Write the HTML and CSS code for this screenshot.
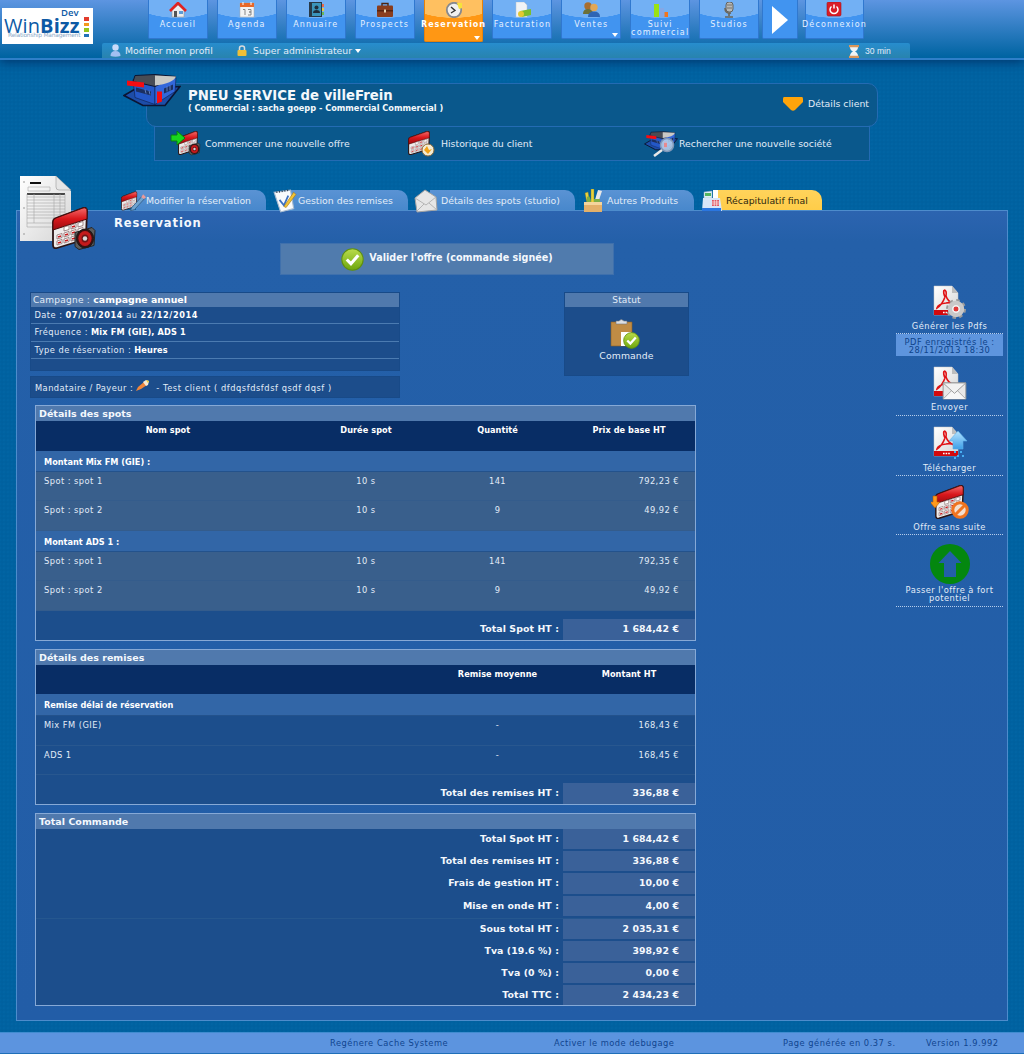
FILE: index.html
```html
<!DOCTYPE html>
<html lang="fr">
<head>
<meta charset="utf-8">
<title>WinBizz - Reservation</title>
<link rel="stylesheet" href="styles.css">
</head>
<body>
<svg class="defs" width="0" height="0" aria-hidden="true">
  <defs>
    <linearGradient id="gRed" x1="0" y1="0" x2="0" y2="1"><stop offset="0" stop-color="#f46a6a"/><stop offset=".5" stop-color="#d8171b"/><stop offset="1" stop-color="#9c0b10"/></linearGradient>
    <linearGradient id="gGreen" x1="0" y1="0" x2="0" y2="1"><stop offset="0" stop-color="#b9dc4b"/><stop offset="1" stop-color="#6ea60d"/></linearGradient>
    <linearGradient id="gPaper" x1="0" y1="0" x2="1" y2="1"><stop offset="0" stop-color="#fff"/><stop offset="1" stop-color="#d5d5d5"/></linearGradient>
    <linearGradient id="gSky" x1="0" y1="0" x2="0" y2="1"><stop offset="0" stop-color="#b5e3ff"/><stop offset="1" stop-color="#3d9fe8"/></linearGradient>
  </defs>
  <symbol id="calendar" viewBox="0 0 36 42" preserveAspectRatio="none">
    <path d="M4 11 31 1q4-1 4 3l-1 25q0 3-3 4L5 41q-4 1-4-3V15q0-3 3-4z" fill="#efecec" stroke="#2b1414" stroke-width="1.800"/>
    <path d="M4 11 31 1q4-1 4 3v8L1 23v-8q0-3 3-4z" fill="url(#gRed)" stroke="#4a0a0a"/>
    <path d="m12 20 5-1.500v4L12 24zm7-2 5-1.500v4L19 22zm7-2 5-1.500v4L26 20zM5 28l5-1.500v4L5 32zm7-2 5-1.500v4L12 30zm7-2 5-1.500v4L19 28zm7-2 5-1.500v4L26 26zM5 34l5-1.500v4L5 38zm7-2 5-1.500v4L12 36zm7-2 5-1.500v4L19 34zm7-2 5-1.500v4L26 32z" fill="#fff" stroke="#7d5c5c" stroke-width=".7"/>
    <path d="m20 20 3-1M6 30l3-1m4-1 3-1m4-1 3-1M6 36l3-1m4-1 3-1m4-1 3-1" stroke="#c8171b" stroke-width="1.500"/>
  </symbol>
  <symbol id="building" viewBox="0 0 58 34">
    <path d="M1 22 13 15l44-2-15 19H20z" fill="#1d4da8" stroke="#0b1533" stroke-width="1.600"/>
    <path d="m10 6 22 5v20l-20-7z" fill="#2458c8" stroke="#0b1533" stroke-width=".5"/>
    <path d="m32 11 21-7-1 14-20 13z" fill="#3267da" stroke="#0b1533" stroke-width=".5"/>
    <path d="m12 2 20-1 21 2-21 10L10 8z" fill="#484c55" stroke="#0b1533"/>
    <path d="M32 2 53 3q-3 7-21 9z" fill="#c9c9c5"/>
    <path d="m4 7 17 2v5L4 12z" fill="#f40d12"/><path d="M34 18h5v10l-5 2z" fill="#f40d12"/>
    <path d="m41 15 9-4v5l-9 4zM13 14l15 4v4l-15-4z" fill="#1b2f60"/>
    <path d="m22 16 1 4m3-3 1 4m17-8v5m3-6v5" stroke="#7ba0e6" stroke-width=".7"/>
  </symbol>
  <symbol id="speaker" viewBox="0 0 24 24">
    <path d="M2 6 19 1l3 3-1 15-15 4-4-3z" fill="#5c5c5c" stroke="#242424"/>
    <ellipse cx="12" cy="12" rx="8.600" ry="9.400" fill="#3b1010" stroke="#1c1c1c"/>
    <ellipse cx="12" cy="12" rx="6.600" ry="7.400" fill="#c41a1c"/><ellipse cx="12" cy="12" rx="3.500" ry="4" fill="#6c1517"/>
    <circle cx="12" cy="12" r="2.200" fill="#d8d8d8"/>
  </symbol>
  <symbol id="pdf" viewBox="0 0 26 31">
    <path d="M1 1h18l6 7v22H1z" fill="url(#gPaper)" stroke="#c4c4c4" stroke-width=".5"/><path d="M19 1v7h6z" fill="#bdbdbd"/>
    <path d="M11 5q3 0 2 6 2 6 8 8M12 12Q9 20 4 23q1-4 9-5 5-1 8 1M11 5q-1 3 1 7" fill="none" stroke="#e01215" stroke-width="1.600"/>
    <path d="M1 25h24v5H1z" fill="#d3090d"/><path d="M10 27.500h7" stroke="#fff" stroke-width="1.400" stroke-dasharray="1.600 1"/>
  </symbol>
  <symbol id="envelope" viewBox="0 0 26 19">
    <path d="M1 1h24v17H1z" fill="#e8e8e8" stroke="#929292"/><path d="m1 18 9-9h6l9 9" fill="#f7f7f7" stroke="#aaa"/><path d="m1 1 12 11L25 1z" fill="#f2f2f2" stroke="#999"/>
  </symbol>
  <symbol id="check" viewBox="0 0 22 22">
    <circle cx="11" cy="11" r="10.200" fill="url(#gGreen)" stroke="#5f8f10"/><path d="m5.500 11 4 4 7-8" fill="none" stroke="#fff" stroke-width="3"/>
  </symbol>
</svg>

<header class="top">
  <div class="logo">
    <span class="logo-dev">Dev</span>
    <span class="logo-name">Win<b>Bizz</b></span>
    <span class="logo-sub">Relationship Management</span>
    <span class="logo-bars"><i></i><i></i><i></i><i></i></span>
  </div>
  <div class="top-main">
    <nav class="nav">
      <a class="tile"><svg viewBox="0 0 18 16"><path d="M3 8v7h12V8L9 3z" fill="#eee" stroke="#999" stroke-width=".6"/><path d="M1 9 9 1l8 8" fill="none" stroke="#e12222" stroke-width="2.600"/><path d="M5 9h3v6H5z" fill="#555"/><path d="M10 9h4v3h-4z" fill="#5d9bd6"/></svg><span>Accueil</span></a>
      <a class="tile"><svg viewBox="0 0 18 16"><path d="M2 1h14v14H2z" fill="#f4f4f4" stroke="#aaa" stroke-width=".5"/><path d="M2 1h14v4H2z" fill="#e8692a"/><path d="M5 0v3m8-3v3" stroke="#fff"/><path d="M5 7.500h2V13m3-5.500h3V10h-2 2v3h-3" fill="none" stroke="#888"/></svg><span>Agenda</span></a>
      <a class="tile"><svg viewBox="0 0 18 16"><path d="M2 0h13v15H2z" fill="#273947"/><path d="M5 1h9v13H5z" fill="#3a94bb"/><circle cx="9.500" cy="5.500" r="2" fill="#1f2d3c"/><path d="M6 11q0-3 3.500-3t3.500 3z" fill="#1f2d3c"/><path d="M15 2h2v3h-2z" fill="#e9694b"/><path d="M15 6h2v3h-2z" fill="#e7c74b"/><path d="M15 10h2v3h-2z" fill="#66b85a"/></svg><span>Annuaire</span></a>
      <a class="tile"><svg viewBox="0 0 18 16"><path d="M6 4V1.500h6V4" fill="none" stroke="#4c2411" stroke-width="1.400"/><rect x="1" y="3.500" width="16" height="11.500" rx="1" fill="#8a3d1c"/><path d="M1 8h16v1.500H1z" fill="#57240f"/><path d="M8 7.500h2v3H8z" fill="#e8d3b0"/></svg><span>Prospects</span></a>
      <a class="tile active"><svg viewBox="0 0 18 16"><circle cx="9" cy="8" r="7.200" fill="#f0f0f0" stroke="#87898e" stroke-width="1.800"/><path d="m6 5 4 3.500L6 11" fill="none" stroke="#333" stroke-width="1.400"/><path d="M12 1h5v5l-3 1z" fill="#f6e33c"/></svg><span>Reservation</span><em class="caret"></em></a>
      <a class="tile"><svg viewBox="0 0 18 16"><path d="M3 0h8l3 3v12H3z" fill="#f0f3f6" stroke="#b8c1ca" stroke-width=".5"/><path d="m7 9 11-2v6l-9 2z" fill="#7dbd2c"/><circle cx="8" cy="12" r="3" fill="#e4c832"/></svg><span>Facturation</span></a>
      <a class="tile"><svg viewBox="0 0 18 16"><circle cx="6" cy="4" r="3.700" fill="#a86e30"/><path d="M1 12q0-5 5-5t5 5z" fill="#6c7038"/><circle cx="12" cy="5.500" r="3.700" fill="#e2a755"/><path d="M6 15q0-5.500 6-5.500t6 5.500z" fill="#2d65b5"/></svg><span>Ventes</span><em class="caret"></em></a>
      <a class="tile"><svg viewBox="0 0 18 16"><path d="M3 2h5v13H3z" fill="#9ae212"/><path d="M9 6h4v9H9z" fill="#84a8e6"/><path d="M13.500 10H17v5h-3.500z" fill="#f2751d"/></svg><span>Suivi<br>commercial</span></a>
      <a class="tile"><svg viewBox="0 0 18 16"><rect x="6" y="0" width="7" height="10" rx="3" fill="#b9b9b6" stroke="#62625e"/><path d="M5 6q0 6 6 5M9 11v3m-4 1h8" fill="none" stroke="#6a655a" stroke-width="1.600"/><path d="M7 3h5M7 6h5" stroke="#73736e"/></svg><span>Studios</span></a>
      <a class="tile more"><svg viewBox="0 0 16 28"><path d="M0 0v28l16-14z" fill="#fff"/></svg></a>
      <a class="tile logout"><svg viewBox="0 0 18 16"><rect x="2" y="0" width="14" height="14" rx="1.500" fill="#d91d26" stroke="#a9131a" stroke-width=".6"/><path d="M6.500 4.500a4 4 0 1 0 5 0M9 2.500v4" fill="none" stroke="#fff" stroke-width="1.500"/></svg><span>Déconnexion</span></a>
    </nav>
    <div class="userbar">
      <svg class="u-user" viewBox="0 0 11 13"><circle cx="5.500" cy="3.500" r="3.200" fill="#c9dbfa"/><path d="M.5 12q0-5 5-5t5 5q-5 1.500-10 0z" fill="#a3bff2"/></svg><span class="u-profile">Modifier mon profil</span>
      <svg class="u-lock" viewBox="0 0 10 11"><path d="M2.500 5V3q0-2 2.500-2t2.500 2v2" fill="none" stroke="#ddd" stroke-width="1.500"/><rect x=".5" y="5" width="9" height="6" rx="1" fill="#f0bf37"/></svg><span class="u-admin">Super administrateur</span><em class="caret"></em>
      <svg class="u-time" viewBox="0 0 12 13"><path d="M2 2q0 3 3 4.500Q2 8 2 11h8q0-3-3-4.500Q10 5 10 2z" fill="#eef3f6"/><path d="M1 0h10v2.200H1zm0 10.800h10V13H1z" fill="#d9965a"/></svg><span class="u-min">30 min</span>
    </div>
  </div>
</header>

<section class="client">
  <div class="client-head">
    <svg class="client-logo"><use href="#building"/></svg>
    <div class="client-name"><h1>PNEU SERVICE de villeFrein</h1><p>( Commercial : sacha goepp - Commercial Commercial )</p></div>
    <svg class="down" viewBox="0 0 20 14"><path d="M1 0h18q1 0 1 2v3l-8 8q-2 1.500-4 0L0 5V2q0-2 1-2z" fill="#ffa40a"/></svg>
    <span>Détails client</span>
  </div>
  <div class="client-menu">
    <a><svg viewBox="0 0 32 26"><use href="#calendar" x="8" y="0" width="20" height="24"/><use href="#speaker" x="18" y="11" width="13" height="14"/><path d="M1 4h6V0l8 7-8 7v-4H1z" fill="#19d81c" stroke="#0a7c12"/></svg><span>Commencer une nouvelle offre</span></a>
    <a><svg viewBox="0 0 32 26"><use href="#calendar" x="2" y="0" width="22" height="24"/><circle cx="22" cy="19" r="6" fill="#f4ecd4" stroke="#8a6a3a"/><path d="m18 19 4 4 4-5-3 1-2-4z" fill="#f2a31a"/></svg><span>Historique du client</span></a>
    <a><svg viewBox="0 0 36 26"><use href="#building" x="0" y="0" width="36" height="20"/><circle cx="24" cy="14" r="6.500" fill="#bcd6ee" fill-opacity=".85" stroke="#7f97b8" stroke-width="1.500"/><path d="m19 19-8 6" stroke="#e8e8e8" stroke-width="2.600"/><path d="M21 12h3v4h-3z" fill="#e68a90"/></svg><span>Rechercher une nouvelle société</span></a>
  </div>
</section>

<nav class="tabs">
  <a class="t1"><svg viewBox="0 0 27 22"><use href="#calendar" x="1" y="1" width="17" height="20"/><path d="m12 18 11-12 3 2-11 12-4 1z" fill="#6fa3cf" stroke="#3a648f"/><path d="m22 7 2-3 3 3-2 2z" fill="#e99a9a"/></svg><span>Modifier la réservation</span></a>
  <a class="t2"><svg viewBox="0 0 22 22"><path d="m1 3 15-2 3 17-12 3z" fill="#f8fafc" stroke="#a6bad0"/><path d="m3 3 12-2" stroke="#345" stroke-width="1.500" stroke-dasharray="1 1.500"/><path d="m6 10 4 5 4-9" fill="none" stroke="#3b70c0" stroke-width="1.600"/><path d="m10 16 9-13 2 2-9 12z" fill="#f2c436" stroke="#a87a18" stroke-width=".6"/></svg><span>Gestion des remises</span></a>
  <a class="t3"><svg viewBox="0 0 24 24"><path d="M1 9 11 1l11 7 1 13-20 2z" fill="#e6e6e6" stroke="#a3a3a3"/><path d="m1 9 11 7L22 8M3 22l7-7m13 6-8-7" fill="none" stroke="#b5b5b5"/></svg><span>Détails des spots (studio)</span></a>
  <a class="t4"><svg viewBox="0 0 20 24"><path d="m2 4 3-1 2 11H4zm6-4h3v14H8z" fill="#e8d23c" stroke="#8b7a20" stroke-width=".4"/><path d="m15 1 4 1-4 12h-4z" fill="#e7e7e7"/><path d="M4 8q3-3 4 5H4zm7 2h6v5h-6z" fill="#7daf46"/><path d="M1 13h18v10H1z" fill="#e3b06a"/><path d="M1 13h18v3H1z" fill="#f4d59c"/></svg><span>Autres Produits</span></a>
  <a class="t5 current"><svg viewBox="0 0 20 22"><path d="m2 2 8-1v7H2z" fill="#dfeef5" stroke="#8fb0c4" stroke-width=".5"/><path d="M3 3h6v3H3z" fill="#53b45f"/><path d="M11 0h5v8h-5z" fill="#fff"/><path d="M1 8h17l2 13H0z" fill="#d8e6f8"/><path d="M0 18h19v3H0z" fill="#2a76e0"/><path d="M10 10h7v6h-7z" fill="#e05560"/><path d="M12.300 10v6m2.400-6v6M10 12h7m-7 2h7" stroke="#fff" stroke-width=".6"/></svg><span>Récapitulatif final</span></a>
</nav>

<main class="panel">
  <svg class="panel-icon" viewBox="0 0 78 78">
    <path d="M1 1h36l15 15v50H1z" fill="url(#gPaper)"/><path d="M37 1v11q0 3 3 3h12z" fill="#e6e6e6" stroke="#888" stroke-width=".5"/>
    <path d="M11 8h11" stroke="#111" stroke-width="2"/><path d="M9 12h22v4H9z" fill="none" stroke="#aaa" stroke-width=".6"/><path d="M8 19h38" stroke="#111" stroke-width="1.600"/>
    <path d="M8 19v33h38V19M15 19v29m20-29v29m6-29v29M8 22h38M8 25h38M8 28h38M8 31h38M8 34h38M8 37h38M8 40h38M8 43h38M8 48h38" fill="none" stroke="#a6a6a6" stroke-width=".6"/>
    <path d="M4 7h2M4 33h2M4 59h2" stroke="#999"/>
    <use href="#calendar" x="33" y="32" width="36" height="42"/><use href="#speaker" x="54" y="50" width="24" height="27"/>
  </svg>
  <div class="content">
    <h2>Reservation</h2>
    <button class="validate"><svg><use href="#check"/></svg>Valider l'offre (commande signée)</button>
    <div class="infos">
      <div class="infos-left">
        <div class="card campaign">
          <h3>Campagne : <b>campagne annuel</b></h3>
          <p class="dates">Date : <b>07/01/2014</b> au <b>22/12/2014</b></p>
          <p>Fréquence : <b>Mix FM (GIE), ADS 1</b></p>
          <p>Type de réservation : <b>Heures</b></p>
        </div>
        <div class="card payer">Mandataire / Payeur : <svg viewBox="0 0 13 11"><path d="m0 11 2-4 6-5 3 3-6 4z" fill="#f0863a"/><path d="m7 2 3-2 3 1-1 4-2 1z" fill="#f7ead2"/><path d="m10 0 3 1-1 2z" fill="#f0cf2a"/></svg><span>- Test client ( dfdqsfdsfdsf qsdf dqsf )</span></div>
      </div>
      <div class="card status">
        <h3>Statut</h3>
        <svg viewBox="0 0 30 30"><path d="M1 3h21v24H1z" fill="#c08c45" stroke="#8c6027" stroke-width=".6"/><path d="M6 2h3q2-3 5 0h3v3H6z" fill="#dcdfe3" stroke="#777" stroke-width=".6"/><path d="M11 13h10v14H11z" fill="#fff"/><use href="#check" x="13" y="13" width="17" height="17"/></svg>
        <span>Commande</span>
      </div>
    </div>

    <section class="box">
      <h3>Détails des spots</h3>
      <div class="row head"><span>Nom spot</span><span>Durée spot</span><span>Quantité</span><span>Prix de base HT</span></div>
      <div class="group">Montant Mix FM (GIE) :</div>
      <div class="row alt"><span>Spot : spot 1</span><span>10 s</span><span>141</span><span>792,23 €</span></div>
      <div class="row alt"><span>Spot : spot 2</span><span>10 s</span><span>9</span><span>49,92 €</span></div>
      <div class="group">Montant ADS 1 :</div>
      <div class="row alt"><span>Spot : spot 1</span><span>10 s</span><span>141</span><span>792,35 €</span></div>
      <div class="row alt"><span>Spot : spot 2</span><span>10 s</span><span>9</span><span>49,92 €</span></div>
      <div class="total foot"><span>Total Spot HT :</span><b>1 684,42 €</b></div>
    </section>

    <section class="box discounts">
      <h3>Détails des remises</h3>
      <div class="row head"><span></span><span></span><span>Remise moyenne</span><span>Montant HT</span></div>
      <div class="group">Remise délai de réservation</div>
      <div class="row"><span>Mix FM (GIE)</span><span></span><span>-</span><span>168,43 €</span></div>
      <div class="row"><span>ADS 1</span><span></span><span>-</span><span>168,45 €</span></div>
      <div class="total foot"><span>Total des remises HT :</span><b>336,88 €</b></div>
    </section>

    <section class="box order">
      <h3>Total Commande</h3>
      <div class="total"><span>Total Spot HT :</span><b>1 684,42 €</b></div>
      <div class="total"><span>Total des remises HT :</span><b>336,88 €</b></div>
      <div class="total"><span>Frais de gestion HT :</span><b>10,00 €</b></div>
      <div class="total"><span>Mise en onde HT :</span><b>4,00 €</b></div>
      <div class="total sub"><span>Sous total HT :</span><b>2 035,31 €</b></div>
      <div class="total"><span>Tva (19.6 %) :</span><b>398,92 €</b></div>
      <div class="total"><span>Tva (0 %) :</span><b>0,00 €</b></div>
      <div class="total"><span>Total TTC :</span><b>2 434,23 €</b></div>
    </section>
  </div>

  <aside class="actions">
    <a class="a1"><svg viewBox="0 0 36 36"><use href="#pdf" x="1" y="1" width="26" height="31"/><circle cx="24" cy="25" r="8.500" fill="none" stroke="#9b9b9b" stroke-width="3" stroke-dasharray="3.400 3.270"/><circle cx="24" cy="25" r="6" fill="#fff" stroke="#c9c9c9" stroke-width="4.500"/><circle cx="24" cy="25" r="3" fill="#e03a3a" stroke="#f0f0f0"/></svg><span>Générer les Pdfs</span></a>
    <p class="saved">PDF enregistrés le :<br>28/11/2013 18:30</p>
    <a class="a2"><svg viewBox="0 0 36 36"><use href="#pdf" x="1" y="1" width="26" height="31"/><use href="#envelope" x="10" y="17" width="25" height="18"/></svg><span>Envoyer</span></a>
    <a class="a3"><svg viewBox="0 0 36 36"><use href="#pdf" x="1" y="1" width="26" height="31"/><path d="m26 6 9 10h-4v8H21v-8h-4z" fill="url(#gSky)" stroke="#5bb0ea" stroke-width=".6"/><path d="M22 26h2v2h-2zm6 0h2v2h-2zm-3 4h2v2h-2zm5 0h2v2h-2zm-8 2h2v2h-2z" fill="#47aef2"/></svg><span>Télécharger</span></a>
    <a class="a4"><svg viewBox="0 0 38 36"><use href="#calendar" x="4" y="0" width="29" height="34"/><path d="M2 11h4v6h3l-5 6-5-6h3z" fill="#ff9a1c" stroke="#b35a08" stroke-width=".6"/><circle cx="29" cy="25" r="7.200" fill="#f3dfd0" stroke="#ef7420" stroke-width="3"/><path d="m24 30 10-10" stroke="#ef7420" stroke-width="3"/></svg><span>Offre sans suite</span></a>
    <a class="a5"><svg viewBox="0 0 40 40"><path d="M20 0a20 20 0 1 0 0 40 20 20 0 0 0 0-40zm0 7 11.500 12H26v14H14V19H8.500z" fill="#04870f"/></svg><span>Passer l'offre à fort<br>potentiel</span></a>
  </aside>
</main>

<footer class="bottom"><span class="f1">Regénere Cache Systeme</span><span class="f2">Activer le mode debugage</span><span class="f3">Page générée en 0.37 s.</span><span class="f4">Version 1.9.992</span></footer>
</body>
</html>
```

FILE: styles.css
```css
* { box-sizing: border-box; }
body {
  margin: 0;
  width: 1024px;
  height: 1054px;
  overflow: hidden;
  display: flex;
  flex-direction: column;
  color: #e2ecf8;
  font: 8.3px/10px "DejaVu Sans", Verdana, sans-serif;
  letter-spacing: .45px;
  white-space: nowrap;
  background-color: #0062a1;
  background-image: radial-gradient(circle, #0459941f 1px, transparent 1.2px), radial-gradient(circle, #0a70ad2e 1px, transparent 1.2px);
  background-size: 4px 4px;
  background-position: 0 0, 2px 2px;
}
h1, h2, h3, p { margin: 0; font-weight: normal; }
svg { display: block; flex: none; }
.defs { position: absolute; }
b { color: #fff; }

/* Header */
.top {
  height: 60px;
  flex: none;
  display: flex;
  align-items: flex-start;
  background: linear-gradient(#5d95e1, #0064a2 57px);
  border-bottom: 2px solid #2f7fc9;
  box-shadow: 0 2px 10px #00366d;
}
.logo {
  position: relative;
  width: 91px;
  height: 36px;
  margin: 8px 9px 0 2px;
  background: #fff;
  color: #0d5aa5;
  letter-spacing: 0;
}
.logo-dev { position: absolute; left: 59px; top: 0; font: 600 9.500px/10px "Open Sans", sans-serif; }
.logo-name { position: absolute; left: 2px; top: 8px; font: 20px/19px "Open Sans", sans-serif; letter-spacing: .1px; }
.logo-name b { color: inherit; }
.logo-sub { position: absolute; left: 6px; top: 24px; font: 5.900px/7px "DejaVu Sans", sans-serif; color: #8ba9c8; letter-spacing: -.2px; }
.logo-bars { position: absolute; left: 82px; top: 9px; display: grid; gap: 2px; }
.logo-bars i { width: 5px; height: 3.500px; background: #e23b2c; }
.logo-bars i:nth-child(2) { background: #f39a1c; }
.logo-bars i:nth-child(3) { background: #93c51c; }
.logo-bars i:nth-child(4) { background: #2272b8; }
.top-main { width: 808px; }
.nav { display: flex; gap: 9px; height: 43px; padding-left: 46px; }
.tile {
  position: relative;
  display: flex;
  flex-direction: column;
  align-items: center;
  flex: none;
  width: 59.900px;
  height: 39px;
  padding-top: 2px;
  background: radial-gradient(ellipse 46px 18px at 50% 0, #72b0f4 98%, transparent) #4194f0;
  border: 1px solid #3078cf;
  border-top: 0;
  border-radius: 0 0 2px 2px;
  color: #e5f0ff;
  font-size: 8px;
  line-height: 8px;
  letter-spacing: 1.150px;
  text-align: center;
}
.tile svg { width: 18px; height: 16px; }
.tile span { margin-top: 3px; }
.tile.active { height: 42px; background: radial-gradient(ellipse 46px 18px at 50% 0, #ffc060 98%, transparent) #ff9714; border-color: #e8820a; color: #fff; font-weight: bold; letter-spacing: 1px; }
.caret { border: 3.500px solid transparent; border-top: 4px solid #fff; border-bottom: 0; }
.tile .caret { position: absolute; right: 2px; bottom: 1px; }
.tile.more { width: 36px; margin: 0 -1.500px 0 -6.500px; background: #4194f0; padding: 6px 0 0 1px; }
.tile.more svg { width: 16px; height: 28px; }
.tile.logout { margin-left: -.5px; }
.userbar {
  height: 15px;
  display: flex;
  align-items: center;
  padding-left: 8px;
  font-size: 9.300px;
  letter-spacing: 0;
  background: linear-gradient(#278dce, #2883ae);
  border-radius: 2px 2px 0 0;
}
.u-user { width: 11px; height: 13px; }
.u-profile { width: 112px; margin-left: 4px; }
.u-lock { width: 10px; height: 11px; margin-right: 6px; }
.userbar .caret { margin-left: 3px; }
.u-time { width: 12px; height: 13px; margin: 2px 5px 0 auto; }
.u-min { width: 45px; padding-top: 1px; font: 8.600px/10px "Liberation Sans", sans-serif; }

/* Client banner */
.client { margin: 23px 146px 0; height: 107px; flex: none; font-size: 9.350px; letter-spacing: 0; }
.client-head {
  position: relative;
  display: flex;
  align-items: center;
  height: 44px;
  padding: 0 8px 2px 41px;
  background: #0a588c;
  border: 1px solid #246bb3;
  border-radius: 10px;
}
.client-logo { position: absolute; left: -24px; top: -11px; width: 58px; height: 35px; }
.client-name { flex: 1; padding-bottom: 6px; color: #f4f8fc; font-weight: bold; }
h1 { font-size: 13.250px; line-height: 14px; font-weight: bold; }
.client-name p { font-size: 8.200px; line-height: 10px; font-weight: bold; }
.down { width: 20px; height: 14px; margin-right: 5px; }
.client-menu {
  position: relative;
  display: flex;
  margin: -1px 8px 0;
  height: 35px;
  background: #0a588c;
  border: 1px solid #246bb3;
}
.client-menu a { display: flex; align-items: center; width: 236px; padding-left: 15px; }
.client-menu a svg { width: 32px; height: 26px; margin-right: 3px; }
.client-menu a:nth-child(3) svg { width: 36px; margin-right: 0; }
.client-menu a:nth-child(3) { padding-left: 16px; }

/* Tabs */
.tabs { display: flex; height: 20px; flex: none; margin-left: 120px; font-size: 9.350px; letter-spacing: 0; }
.tabs a { position: relative; z-index: 1; display: flex; align-items: center; height: 20px; flex: none; padding-top: 2px; background: linear-gradient(#5a93d4, #4888cc) no-repeat 16px 0; border-radius: 0 10px 0 0; }
.tabs svg { width: 24px; height: 24px; margin-bottom: 1px; }
.t1 { width: 146px; margin-right: 7px; }
.tabs .t1 svg { width: 26px; }
.t2 { width: 135px; margin-right: 6px; }
.t2 span { margin-left: 1px; }
.t3 { width: 161px; margin-right: 7px; }
.t3 svg { margin-right: 3px; }
.t4 { width: 112px; margin-right: 7px; }
.t4 span { margin-left: 2px; }
.t5 { width: 121px; }
.tabs .t4 svg { margin-left: -1px; }
.tabs .current { background-image: linear-gradient(#ffd35b, #ffcd49); color: #2d260e; }
.t5 span { margin-left: 3px; }
.tabs .t5 svg { width: 22px; height: 22px; margin-left: 0; }

/* Main panel */
.panel {
  position: relative;
  display: flex;
  justify-content: space-between;
  width: 992px;
  height: 811px;
  flex: none;
  margin-left: 16px;
  padding: 0 4px 0 13px;
  background: linear-gradient(#2c64b0, #2460a9 30px, #225da7);
  border: 1px solid #4d8ccc;
}
.panel-icon { position: absolute; left: 1px; top: -36px; width: 80px; height: 78px; }
.content { width: 667px; }
h2 { margin: 6px 0 0 84px; font-size: 11.500px; line-height: 13px; font-weight: bold; letter-spacing: .9px; color: #f4f8fd; }
.validate {
  display: flex;
  align-items: center;
  justify-content: center;
  width: 334px;
  height: 32px;
  margin: 13px 0 0 250px;
  padding: 0 0 2px;
  background: #507bad;
  border: 1px solid #3f70ac;
  color: #f4f8fd;
  font: bold 9.600px/12px "DejaVu Sans", Verdana, sans-serif;
  letter-spacing: 0;
}
.validate svg { width: 23px; height: 23px; margin: 2px 5px 0 0; }
.infos { display: flex; justify-content: space-between; align-items: flex-start; margin: 17px 8px 8px 0; height: 105px; }
.card { background: #1c4d8b; border: 1px solid #184a88; }
.card h3 { height: 14px; padding: 0 2px; font-size: 9px; line-height: 14px; letter-spacing: .15px; background: #5079ad; }
.infos-left { width: 370px; }
.campaign { height: 79px; }
.campaign h3 { letter-spacing: .25px; }
.campaign h3 b { font-size: 9.400px; letter-spacing: 0; }
.campaign p { height: 17.400px; padding: 3px 3.500px 0; border-bottom: 1px solid #4b7bb1; }
.campaign p b { font-size: 8.200px; letter-spacing: .15px; }
.campaign .dates b { letter-spacing: .6px; }
.payer { display: flex; align-items: center; height: 22px; margin-top: 5px; padding: 2px 4px 0; }
.payer svg { width: 13px; height: 11px; margin: -5px 7px 0 3px; }
.payer span { letter-spacing: .55px; }
.status { width: 125px; height: 84px; display: flex; flex-direction: column; align-items: center; font-size: 9.300px; letter-spacing: .1px; }
.status h3 { width: 100%; text-align: center; }
.status svg { width: 30px; height: 30px; margin: 12px 4px 2px 0; }

/* Detail tables */
.box { width: 661px; margin: 0 0 8px 5px; border: 1px solid #86a9d6; background: #1c4e8c; }
.box h3 { height: 15px; padding-left: 3px; background: #5079ad; color: #f4f8fd; font-size: 9.500px; line-height: 16px; font-weight: bold; letter-spacing: .02px; }
.row { display: grid; grid-template-columns: 264px 132px 131px 1fr; height: 29.500px; padding-top: 4px; text-align: center; border-bottom: 1px solid #28578f; }
.row span:first-child { text-align: left; padding-left: 8px; }
.row span:last-child { text-align: right; padding-right: 16px; }
.row.alt { background: #395f8c; border-color: #345c8c; }
.row.head { background: #082d65; border: 0; color: #fff; font-size: 8.200px; font-weight: bold; letter-spacing: .05px; }
.row.head span { text-align: center; padding: 0; }
.group { height: 21px; padding: 6px 8px 0; background: #3266a7; border-bottom: 1px solid #23528c; color: #fff; font-size: 8.200px; font-weight: bold; letter-spacing: 0; }
.discounts .group { height: 22px; }
.total { display: flex; justify-content: flex-end; height: 22.200px; color: #f4f8fd; font-size: 9.400px; line-height: 19px; font-weight: bold; letter-spacing: .08px; border-bottom: 2px solid #1c4e8c; }
.total span { padding-right: 4px; }
.total b { width: 132px; padding-right: 16px; text-align: right; background: #3a6199; color: #f4f8fd; }
.foot { height: 29px; padding-top: 8px; border: 0; }
.order { height: 193px; overflow: hidden; }
.order .sub { height: 23px; border-top: 1px solid #25578f; }

/* Actions */
.actions { width: 107px; padding-top: 73px; text-align: center; line-height: 8px; }
.actions a { display: flex; flex-direction: column; align-items: center; border-bottom: 1px dotted #b5cceb; }
.actions svg { width: 36px; height: 36px; }
.a1 { height: 50px; }
.a1 span { margin-top: 2px; }
.saved { height: 22px; padding-top: 4px; margin-bottom: 9px; background: #5e95de; color: #0e448b; }
.a2 { height: 51px; }
.a2 span { margin-top: 2px; }
.a3 { height: 60px; padding-top: 9px; }
.a3 span { margin-top: 3px; }
.a4 { height: 59px; padding-top: 9px; }
.actions .a4 svg { width: 38px; }
.a4 span { margin-top: 2px; }
.a5 { height: 72px; padding-top: 9px; }
.actions .a5 svg { width: 40px; height: 40px; }
.a5 span { margin-top: 1.500px; }

/* Footer */
.bottom {
  display: flex;
  align-items: center;
  height: 22px;
  flex: none;
  margin-top: 11px;
  padding-left: 330px;
  background: #5c94df;
  border-top: 1px solid #418cd0;
  border-bottom: 1px solid #1f6fb8;
  color: #10458f;
  letter-spacing: .52px;
}
.f1 { width: 224px; }
.f2 { width: 229px; letter-spacing: .45px; }
.f3 { width: 143px; }
```
